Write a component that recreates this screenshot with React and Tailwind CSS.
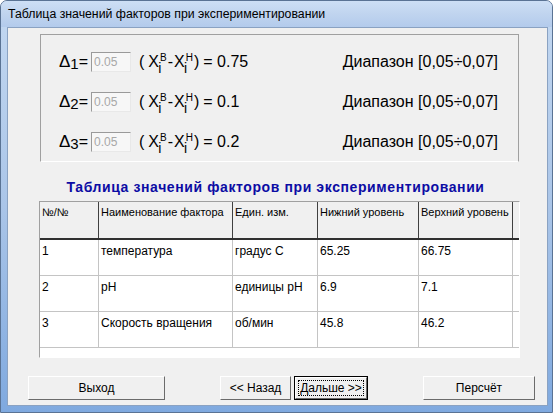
import React from 'react'

const rows = [
  { n: '1', name: 'температура', unit: 'градус С', lo: '65.25', hi: '66.75' },
  { n: '2', name: 'pH', unit: 'единицы pH', lo: '6.9', hi: '7.1' },
  { n: '3', name: 'Скорость вращения', unit: 'об/мин', lo: '45.8', hi: '46.2' },
]

const cols = ['w-[59px]', 'w-[134px]', 'w-[85px]', 'w-[101px]', 'w-[94px]']
const heads = ['№/№', 'Наименование фактора', 'Един. изм.', 'Нижний уровень', 'Верхний уровень']

// X с верхним индексом (B/H) и нижним i
function Xi({ sup }) {
  return (
    <span className="relative inline-block leading-[20px]">
      <span>X</span>
      <span className="relative top-[-6px] text-[10px] leading-none ml-[1px]">{sup}</span>
      <span className="absolute left-[10px] top-[9px] text-[14px] leading-none">i</span>
    </span>
  )
}

function DeltaRow({ idx, value }) {
  return (
    <div className="h-[40px] flex items-center text-[16px] text-black">
      <div className="w-[32px] ml-[18px] flex items-baseline">
        <span className="text-[17px]">Δ</span>
        <span className="text-[15px] translate-y-[2px]">{idx}</span>
        <span>=</span>
      </div>
      <div className="w-[40px] h-[20px] border-t border-l border-[#9a9a9a] border-b border-r border-b-[#e8e8e8] border-r-[#e8e8e8] bg-[#f7f7f7] text-[12px] text-[#a8a8a8] leading-[18px] pl-[2px]">
        0.05
      </div>
      <div className="ml-[8px] flex items-center">
        <span>(</span>
        <span className="ml-[4px]"><Xi sup="B" /></span>
        <span className="ml-[1px]">-</span>
        <span className="ml-[1px]"><Xi sup="H" /></span>
        <span className="ml-[1px]">)</span>
        <span className="ml-[4px]">= {value}</span>
      </div>
      <div className="ml-auto mr-[20px]">Диапазон [0,05÷0,07]</div>
    </div>
  )
}

function Btn({ children, w, focus, className = '' }) {
  return (
    <div className={`${w} h-[24px] ${focus ? 'border border-black' : ''} ${className}`}>
      <div className="w-full h-full border-t border-l border-white border-b border-r border-b-[#6b6b6b] border-r-[#6b6b6b] bg-[#f0f0f0] flex items-center justify-center text-[12px] text-black relative">
        {focus && <div className="absolute inset-[2px] border border-dotted border-black" />}
        <span className="relative">{children}</span>
      </div>
    </div>
  )
}

export default function App() {
  return (
    <div className="w-[559px] h-[413px] bg-white overflow-hidden font-['Liberation_Sans',Arial,sans-serif]">
      <div className="w-[553px] h-[413px] rounded-t-[7px] border border-[#5a7394] bg-gradient-to-b from-[#c3d8f1] via-[#aac5e8] to-[#7fa9df] flex flex-col">
        <div className="h-[26px] flex items-center pl-[7px] text-[12.3px] text-black bg-gradient-to-b from-[#cddff5] via-[#c0d4ef] to-[#b3cbec] rounded-t-[6px]">
          Таблица значений факторов при экспериментировании
        </div>
        <div className="ml-[6px] w-[541px] h-[379px] bg-[#f0f0f0] border border-[#8aa2c2] flex flex-col">
          <div className="ml-[32px] mt-[6px] w-[479px] h-[128px] border border-t-[#a0a0a0] border-l-[#a0a0a0] border-b-white border-r-[#a0a0a0] pt-[7px]">
            <DeltaRow idx="1" value="0.75" />
            <DeltaRow idx="2" value="0.1" />
            <DeltaRow idx="3" value="0.2" />
          </div>
          <div className="mt-[15px] h-[20px] leading-[20px] text-center text-[14px] font-bold text-[#0c0ca4] tracking-[0.6px] pr-[4px]">
            Таблица значений факторов при экспериментировании
          </div>
          <div className="ml-[31px] mt-[4px] w-[481px] h-[157px] border border-t-[#a0a0a0] border-l-[#a0a0a0] border-b-white border-r-white bg-white">
            <div className="flex h-[38px] bg-[#f0f0f0] border-b-2 border-[#303030]">
              {heads.map((h, i) => (
                <div key={h} className={`${cols[i]} border-r border-[#404040] text-[11px] leading-[14px] pl-[2px] pt-[3px] text-black whitespace-nowrap overflow-hidden`}>
                  {h}
                </div>
              ))}
            </div>
            {rows.map(r => (
              <div key={r.n} className="flex h-[36px] border-b border-[#c4c4c4]">
                {[r.n, r.name, r.unit, r.lo, r.hi].map((v, i) => (
                  <div key={i} className={`${cols[i]} border-r border-[#c4c4c4] text-[12px] leading-[14px] pl-[2px] pt-[4px] text-black`}>
                    {v}
                  </div>
                ))}
              </div>
            ))}
          </div>
          <div className="mt-[18px] flex items-start">
            <Btn w="w-[137px]" className="ml-[20px]">Выход</Btn>
            <Btn w="w-[71px]" className="ml-[55px]">&lt;&lt; Назад</Btn>
            <Btn w="w-[74px]" focus className="ml-[3px]">Дальше &gt;&gt;</Btn>
            <Btn w="w-[112px]" className="ml-[55px]">Персчёт</Btn>
          </div>
        </div>
      </div>
    </div>
  )
}
